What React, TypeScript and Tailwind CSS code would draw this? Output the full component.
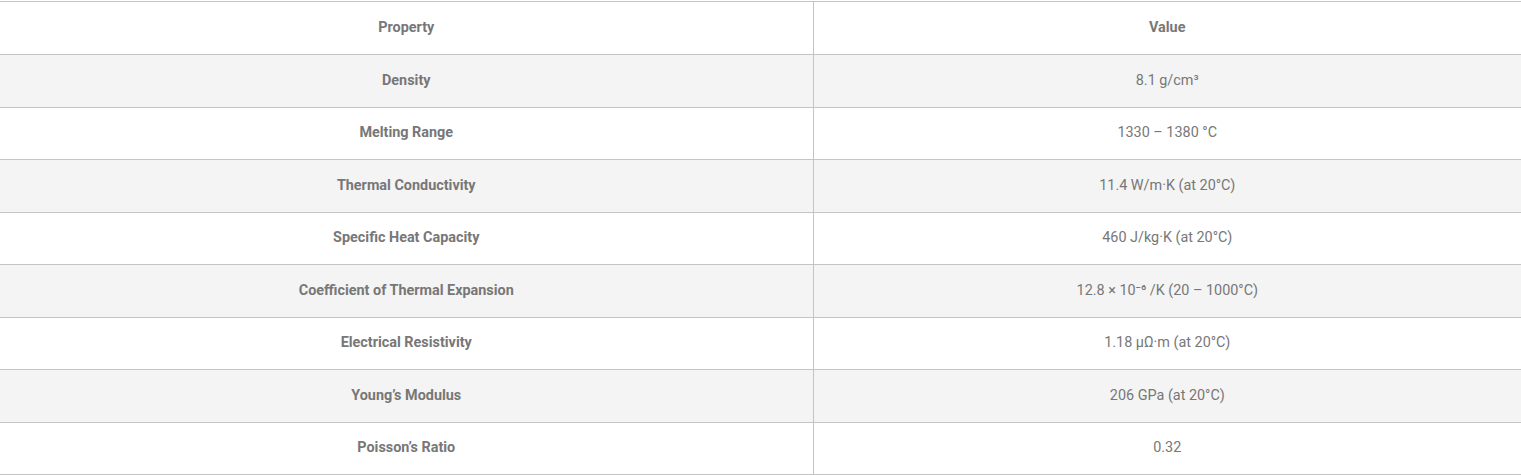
const ROWS = [
  { name: "Density", value: "8.1 g/cm³" },
  { name: "Melting Range", value: "1330 – 1380 °C" },
  { name: "Thermal Conductivity", value: "11.4 W/m·K (at 20°C)" },
  { name: "Specific Heat Capacity", value: "460 J/kg·K (at 20°C)" },
  { name: "Coefficient of Thermal Expansion", value: "12.8 × 10⁻⁶ /K (20 – 1000°C)" },
  { name: "Electrical Resistivity", value: "1.18 μΩ·m (at 20°C)" },
  { name: "Young’s Modulus", value: "206 GPa (at 20°C)" },
  { name: "Poisson’s Ratio", value: "0.32" },
];

export default function App() {
  return (
    <div className="w-[1521px] bg-white pt-px font-['Roboto',sans-serif] text-[14.4px] text-[#777]">
      <table className="w-full table-fixed border-collapse">
        <colgroup>
          <col className="w-[813px]" />
          <col />
        </colgroup>
        <thead>
          <tr className="h-[53px] border-y border-[#c4c4c4]">
            <th className="border-r border-[#c4c4c4] text-center font-bold">Property</th>
            <th className="text-center font-bold">Value</th>
          </tr>
        </thead>
        <tbody>
          {ROWS.map((r, i) => (
            <tr
              key={r.name}
              className={`h-[52.5px] border-b border-[#c4c4c4] ${i % 2 === 0 ? "bg-[#f4f4f4]" : "bg-white"}`}
            >
              <td className="border-r border-[#c4c4c4] text-center font-bold">{r.name}</td>
              <td className="text-center">{r.value}</td>
            </tr>
          ))}
        </tbody>
      </table>
    </div>
  );
}
